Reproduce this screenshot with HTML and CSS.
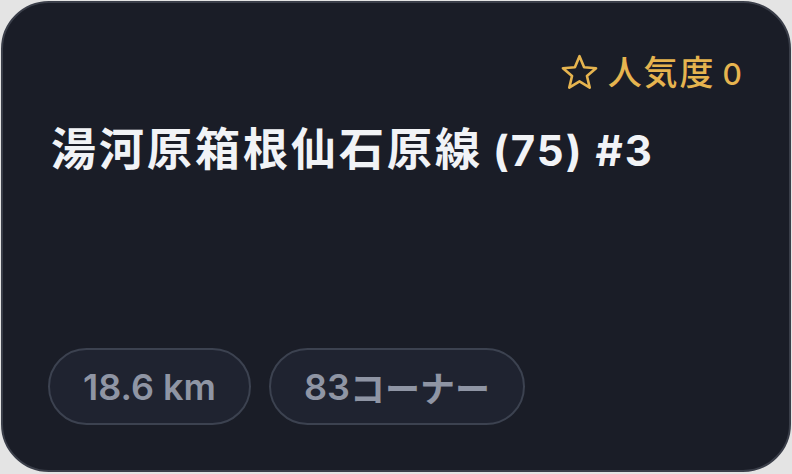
FILE: index.html
```html
<!DOCTYPE html>
<html lang="ja">
<head>
<meta charset="utf-8">
<link rel="stylesheet" href="styles.css">
</head>
<body>
<div class="card">
  <div class="top">
    <span class="pop">
      <svg class="star" viewBox="0 0 34 34" width="37" height="37" fill="none" stroke="currentColor" stroke-width="2.4" stroke-linejoin="round">
        <path d="M17 2L21.23 12.18L32.22 13.06L23.85 20.22L26.4 30.94L17 25.2L7.6 30.94L10.15 20.22L1.78 13.06L12.77 12.18Z"/>
      </svg>
      <span class="pop-label"><span class="pop-cjk">人気度</span> 0</span>
    </span>
  </div>
  <h1 class="title"><span class="title-cjk">湯河原箱根仙石原線</span> <span class="title-latin">(75) #3</span></h1>
  <div class="spacer"></div>
  <div class="chips">
    <span class="chip">18.6 km</span>
    <span class="chip">83<span class="chip-cjk">コーナー</span></span>
  </div>
</div>
</body>
</html>
```
FILE: styles.css
```css
html, body {
  margin: 0;
  padding: 0;
  background: #e4e4e4;
}
body {
  width: 792px;
  height: 474px;
  overflow: hidden;
  font-family: Inter, "Noto Sans CJK JP", sans-serif;
}
.card {
  box-sizing: border-box;
  margin: 1px;
  width: 790px;
  height: 471px;
  background: #1a1d27;
  border: 2px solid #3a3e49;
  border-radius: 48px;
  padding: 46px 49px 45px 45px;
  display: flex;
  flex-direction: column;
}
.top {
  display: flex;
  justify-content: flex-end;
}
.pop {
  display: flex;
  align-items: center;
  gap: 10px;
  margin-right: -2px;
  color: #e6b44f;
  font-size: 30px;
  font-weight: 500;
  line-height: 44px;
}
.pop-label {
  word-spacing: -1px;
}
.pop-cjk {
  font-family: "Noto Sans CJK JP", sans-serif;
  font-size: 34px;
  letter-spacing: 2px;
}
.star {
  display: block;
}
.title {
  margin: 21px 0 0 3px;
  color: #f1f3f6;
  font-size: 42px;
  font-weight: 700;
  line-height: 60px;
  white-space: nowrap;
}
.title-cjk {
  font-family: "Noto Sans CJK JP", sans-serif;
  font-size: 45px;
  letter-spacing: 3px;
}
.title-latin {
  letter-spacing: 2px;
}
.spacer {
  flex: 1;
}
.chips {
  display: flex;
  gap: 18px;
}
.chip {
  box-sizing: border-box;
  height: 77px;
  padding: 0 33px;
  display: flex;
  align-items: center;
  border: 2px solid #3c4250;
  border-radius: 40px;
  background: #1f2330;
  color: #8f95a4;
  font-size: 36px;
  font-weight: 600;
}
.chip-cjk {
  font-size: 35px;
}
```
